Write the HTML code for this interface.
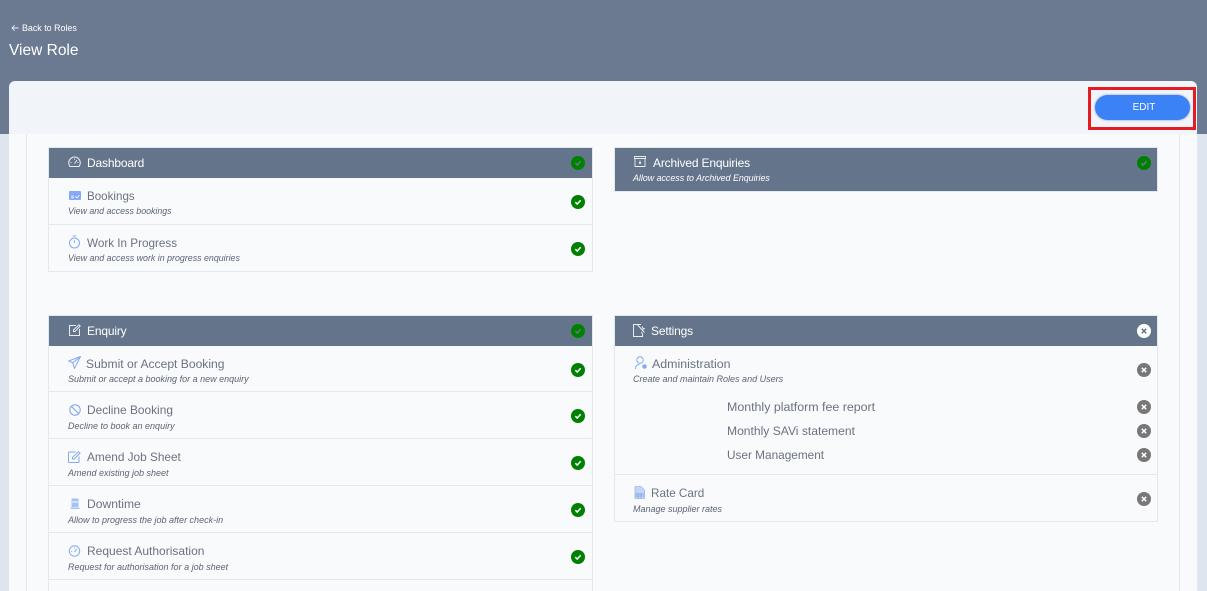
<!DOCTYPE html>
<html><head><meta charset="utf-8"><style>
html,body{margin:0;padding:0;width:1207px;height:591px;overflow:hidden;background:#dfe5ee;font-family:"Liberation Sans",sans-serif}
div,svg,span{position:absolute;box-sizing:border-box}
.t{white-space:nowrap;line-height:16px;height:16px}
.h{color:#fff;font-size:12px;letter-spacing:-.17px}
.r{color:#6b7280;font-size:12.1px}
.s{color:#5b6472;font-size:9px;font-style:italic;line-height:12px;height:12px;white-space:nowrap}
.p{left:0;height:1px;background:#e2e8f0}
.bar{background:#64748b}
.c{width:14px;height:14px;border-radius:50%}
.c svg{left:0;top:0}
</style></head><body>
<div style="left:0;top:0;width:1207px;height:134px;background:#6b7a90"></div>
<div style="left:9px;top:134px;width:1188px;height:457px;background:#f8fafc"></div>
<div style="left:26px;top:134px;width:1px;height:457px;background:#e2e8f0"></div>
<div style="left:1179px;top:134px;width:1px;height:457px;background:#e2e8f0"></div>
<div style="left:9px;top:81px;width:1188px;height:53px;background:#f1f4f9;border-radius:6px 6px 0 0"></div>

<svg style="left:11px;top:24px" width="8" height="8" viewBox="0 0 8 8" fill="none" stroke="#e8edf4" stroke-width=".9"><path d="M7.500 4H1M3.600 1.300 1 4l2.600 2.700"/></svg>
<div class="t" style="left:22px;top:20px;color:#fff;font-size:8.9px">Back to Roles</div>
<div class="t" style="left:9px;top:40px;color:#fff;font-size:15.500px;line-height:21px;height:21px">View Role</div>

<div style="left:1088px;top:87px;width:108px;height:43px;border:3px solid #e31b23"></div>
<div style="left:1095px;top:95px;width:95px;height:25px;border-radius:13px;background:#3b82f6;box-shadow:0 0 2px #7f93b0;color:#fff;font-size:10px;line-height:26px;text-align:center;padding-left:3px">EDIT</div>

<!-- Dashboard -->
<div style="left:48px;top:147px;width:545px;height:125px;border:1px solid #e2e8f0"></div>
<div class="bar" style="left:49px;top:148px;width:543px;height:29.500px"></div>
<svg style="left:68px;top:156px" width="13" height="12" viewBox="0 0 13 12" fill="none" stroke="#e8edf4" stroke-width="1"><path d="M2 10.500A5.800 5.800 0 1 1 11 10.500ZM6.500 7.500 9 4M2.500 6.500h1M9.500 6.500h1M6.500 2.700v1"/></svg>
<div class="t h" style="left:87px;top:155px">Dashboard</div>
<div class="c" style="left:571px;top:156px;background:#008000"><svg width="14" height="14" viewBox="0 0 14 14" fill="none" stroke="#64748b" stroke-width="1.500"><path d="M4.300 7.200 6.200 9l3.500-3.800"/></svg></div>
<svg style="left:69px;top:190px" width="12" height="11" viewBox="0 0 12 11"><rect x="0" y="1" width="12" height="9" rx="1" fill="#86a9f5"/><path d="M2 6h3M2 7.800h3M6.500 6.500l1.300 1.300 2.500-2.500" stroke="#fff" fill="none" stroke-width=".8"/></svg>
<div class="t r" style="left:87px;top:189px;font-size:11.600px">Bookings</div>
<div class="s" style="left:68px;top:205px;font-size:8.800px">View and access bookings</div>
<div class="c" style="left:571px;top:195px;background:#008000"><svg width="14" height="14" viewBox="0 0 14 14" fill="none" stroke="#fff" stroke-width="1.500"><path d="M4.300 7.200 6.200 9l3.500-3.800"/></svg></div>
<div class="p" style="left:49px;top:224px;width:543px"></div>
<svg style="left:68px;top:235px" width="13" height="14" viewBox="0 0 13 14" fill="none" stroke="#86a9f0" stroke-width="1"><circle cx="6.500" cy="8" r="5"/><path d="M4.800 1h3.400M6.500 5.500V8"/></svg>
<div class="t r" style="left:87px;top:236px;font-size:11.700px">Work In Progress</div>
<div class="s" style="left:68px;top:252px;font-size:8.850px">View and access work in progress enquiries</div>
<div class="c" style="left:571px;top:242px;background:#008000"><svg width="14" height="14" viewBox="0 0 14 14" fill="none" stroke="#fff" stroke-width="1.500"><path d="M4.300 7.200 6.200 9l3.500-3.800"/></svg></div>

<!-- Archived -->
<div style="left:614px;top:147px;width:544px;height:45px;border:1px solid #e2e8f0"></div>
<div class="bar" style="left:615px;top:148px;width:542px;height:43px"></div>
<svg style="left:634px;top:156px" width="12" height="11" viewBox="0 0 12 11" fill="none" stroke="#e8edf4" stroke-width=".9"><path d="M.500.500h11v2H.500zM1 2.500v8h10v-8M6 4.500v3M4.800 6.500 6 7.700l1.200-1.200"/></svg>
<div class="t h" style="left:653px;top:155px">Archived Enquiries</div>
<div class="s" style="left:633px;top:172px;color:#fff;font-size:8.850px">Allow access to Archived Enquiries</div>
<div class="c" style="left:1137px;top:156px;background:#008000"><svg width="14" height="14" viewBox="0 0 14 14" fill="none" stroke="#64748b" stroke-width="1.500"><path d="M4.300 7.200 6.200 9l3.500-3.800"/></svg></div>

<!-- Enquiry -->
<div style="left:48px;top:315px;width:545px;height:276px;border:1px solid #e2e8f0;border-bottom:0"></div>
<div class="bar" style="left:49px;top:316px;width:543px;height:29.500px"></div>
<svg style="left:69px;top:324px" width="12" height="12" viewBox="0 0 12 12" fill="none" stroke="#e8edf4" stroke-width="1"><path d="M7 1.500H.500v10h10V5M4.500 7.500V6L10 .800l1.200 1.200L6 7.500z"/></svg>
<div class="t h" style="left:87px;top:323px">Enquiry</div>
<div class="c" style="left:571px;top:324px;background:#008000"><svg width="14" height="14" viewBox="0 0 14 14" fill="none" stroke="#64748b" stroke-width="1.500"><path d="M4.300 7.200 6.200 9l3.500-3.800"/></svg></div>

<svg style="left:68px;top:356px" width="13" height="13" viewBox="0 0 13 13" fill="none" stroke="#86a9f0" stroke-width="1"><path d="M12.500.500.700 5l4 1.800 1.800 5.500zM12.500.500 4.700 6.800"/></svg>
<div class="t r" style="left:86px;top:356px">Submit or Accept Booking</div>
<div class="s" style="left:68px;top:373px">Submit or accept a booking for a new enquiry</div>
<div class="c" style="left:571px;top:363px;background:#008000"><svg width="14" height="14" viewBox="0 0 14 14" fill="none" stroke="#fff" stroke-width="1.500"><path d="M4.300 7.200 6.200 9l3.500-3.800"/></svg></div>
<div class="p" style="left:49px;top:391px;width:543px"></div>

<svg style="left:69px;top:404px" width="12" height="12" viewBox="0 0 12 12" fill="none" stroke="#86a9f0" stroke-width="1.100"><circle cx="6" cy="6" r="5.200"/><path d="M2.300 2.300l7.400 7.400"/></svg>
<div class="t r" style="left:87px;top:402px;font-size:11.900px">Decline Booking</div>
<div class="s" style="left:68px;top:420px">Decline to book an enquiry</div>
<div class="c" style="left:571px;top:409px;background:#008000"><svg width="14" height="14" viewBox="0 0 14 14" fill="none" stroke="#fff" stroke-width="1.500"><path d="M4.300 7.200 6.200 9l3.500-3.800"/></svg></div>
<div class="p" style="left:49px;top:438px;width:543px"></div>

<svg style="left:68px;top:451px" width="13" height="12" viewBox="0 0 13 12" fill="none" stroke="#86a9f0" stroke-width="1"><path d="M7.500 1H1.500a1 1 0 0 0-1 1v8.500a1 1 0 0 0 1 1H10a1 1 0 0 0 1-1V5.500M4.500 8V6.300L10.500.800 12 2.200 6.200 8z"/></svg>
<div class="t r" style="left:87px;top:449px;font-size:11.800px">Amend Job Sheet</div>
<div class="s" style="left:68px;top:467px">Amend existing job sheet</div>
<div class="c" style="left:571px;top:456px;background:#008000"><svg width="14" height="14" viewBox="0 0 14 14" fill="none" stroke="#fff" stroke-width="1.500"><path d="M4.300 7.200 6.200 9l3.500-3.800"/></svg></div>
<div class="p" style="left:49px;top:485px;width:543px"></div>

<svg style="left:70px;top:498px" width="10" height="12" viewBox="0 0 10 12"><path d="M1.500 1.500a1 1 0 0 1 1-1h5a1 1 0 0 1 1 1V9h-7zM.500 9.500h9V11h-9z" fill="#a6c1f5"/><path d="M2 4h6" stroke="#fff" stroke-width="1"/></svg>
<div class="t r" style="left:87px;top:496px">Downtime</div>
<div class="s" style="left:68px;top:514px">Allow to progress the job after check-in</div>
<div class="c" style="left:571px;top:503px;background:#008000"><svg width="14" height="14" viewBox="0 0 14 14" fill="none" stroke="#fff" stroke-width="1.500"><path d="M4.300 7.200 6.200 9l3.500-3.800"/></svg></div>
<div class="p" style="left:49px;top:532px;width:543px"></div>

<svg style="left:68px;top:545px" width="13" height="12" viewBox="0 0 13 12" fill="none" stroke="#86a9f0" stroke-width="1"><circle cx="6.500" cy="6" r="5.200"/><path d="M6.500 7 9 3.800M3.200 6.500h1M6.500 2.300v1"/></svg>
<div class="t r" style="left:87px;top:543px;font-size:12px">Request Authorisation</div>
<div class="s" style="left:68px;top:561px">Request for authorisation for a job sheet</div>
<div class="c" style="left:571px;top:550px;background:#008000"><svg width="14" height="14" viewBox="0 0 14 14" fill="none" stroke="#fff" stroke-width="1.500"><path d="M4.300 7.200 6.200 9l3.500-3.800"/></svg></div>
<div class="p" style="left:49px;top:579px;width:543px"></div>

<!-- Settings -->
<div style="left:614px;top:315px;width:544px;height:207px;border:1px solid #e2e8f0"></div>
<div class="bar" style="left:615px;top:316px;width:542px;height:29.500px"></div>
<svg style="left:633px;top:324px" width="13" height="13" viewBox="0 0 13 13" fill="none" stroke="#e8edf4" stroke-width="1"><path d="M8 .500H.500v12h9V10M4.500 1l3 3M6 2.500l5.500 6M9 2.500l.7 1.500 1.500.7-1.500.7M8.500 8l1 2"/></svg>
<div class="t h" style="left:651px;top:323px">Settings</div>
<div class="c" style="left:1137px;top:324px;background:#fff"><svg width="14" height="14" viewBox="0 0 14 14" fill="none" stroke="#64748b" stroke-width="1.500"><path d="m4.800 4.800 4.400 4.400M9.200 4.800 4.800 9.200"/></svg></div>

<svg style="left:635px;top:356px" width="12" height="14" viewBox="0 0 12 14" fill="none" stroke="#86a9f0" stroke-width="1"><circle cx="5" cy="4" r="3.200"/><path d="M.500 13c0-3 1.500-4.500 4-4.500"/><circle cx="9.500" cy="10.500" r="1.800" fill="#86a9f0"/></svg>
<div class="t r" style="left:652px;top:356px;font-size:12.400px">Administration</div>
<div class="s" style="left:633px;top:373px">Create and maintain Roles and Users</div>
<div class="c" style="left:1137px;top:363px;background:#777"><svg width="14" height="14" viewBox="0 0 14 14" fill="none" stroke="#fff" stroke-width="1.500"><path d="m4.800 4.800 4.400 4.400M9.200 4.800 4.800 9.200"/></svg></div>

<div class="t r" style="left:727px;top:399px;font-size:12.400px">Monthly platform fee report</div>
<div class="c" style="left:1137px;top:400px;background:#777"><svg width="14" height="14" viewBox="0 0 14 14" fill="none" stroke="#fff" stroke-width="1.500"><path d="m4.800 4.800 4.400 4.400M9.200 4.800 4.800 9.200"/></svg></div>
<div class="t r" style="left:727px;top:423px">Monthly SAVi statement</div>
<div class="c" style="left:1137px;top:424px;background:#777"><svg width="14" height="14" viewBox="0 0 14 14" fill="none" stroke="#fff" stroke-width="1.500"><path d="m4.800 4.800 4.400 4.400M9.200 4.800 4.800 9.200"/></svg></div>
<div class="t r" style="left:727px;top:447px;font-size:11.800px">User Management</div>
<div class="c" style="left:1137px;top:448px;background:#777"><svg width="14" height="14" viewBox="0 0 14 14" fill="none" stroke="#fff" stroke-width="1.500"><path d="m4.800 4.800 4.400 4.400M9.200 4.800 4.800 9.200"/></svg></div>
<div class="p" style="left:615px;top:474px;width:542px"></div>

<svg style="left:634px;top:486px" width="11" height="13" viewBox="0 0 11 13"><path d="M1 .500h6l3.500 3.500v8.500H1z" fill="#c4d5f7" stroke="#9db9f2" stroke-width=".8"/><path d="M1 8h9.500M1 10h9.500M4 7v5.500M7 7v5.500" stroke="#7fa0ea" stroke-width=".7"/></svg>
<div class="t r" style="left:651px;top:486px;font-size:11.700px">Rate Card</div>
<div class="s" style="left:633px;top:503px">Manage supplier rates</div>
<div class="c" style="left:1137px;top:492px;background:#777"><svg width="14" height="14" viewBox="0 0 14 14" fill="none" stroke="#fff" stroke-width="1.500"><path d="m4.800 4.800 4.400 4.400M9.200 4.800 4.800 9.200"/></svg></div>
</body></html>
